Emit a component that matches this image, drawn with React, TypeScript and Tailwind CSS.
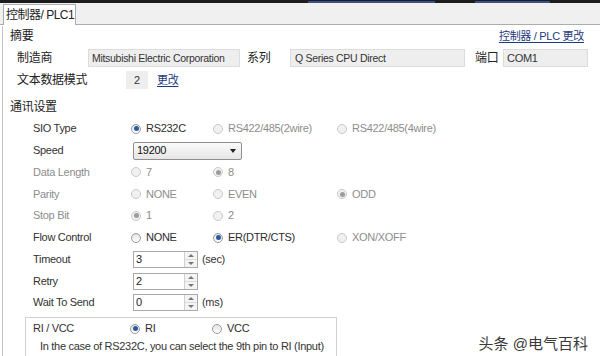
import React from "react";

const FONT = "font-['Liberation_Sans','Noto_Sans_CJK_SC',sans-serif]";

type RadioProps = { checked?: boolean; disabled?: boolean; label: string };

const Radio: React.FC<RadioProps> = ({ checked, disabled, label }) => (
  <div className="flex items-center">
    <span
      className={`w-[10px] h-[10px] rounded-full border flex items-center justify-center ${
        disabled
          ? "border-[#c9c9c9] bg-[#f1f1f1]"
          : "border-[#9a9a9a] bg-gradient-to-b from-[#e2e2e2] to-white"
      }`}
    >
      {checked && (
        <span
          className={`w-[5px] h-[5px] rounded-full ${
            disabled ? "bg-[#9c9c9c]" : "bg-[#2d5a9e]"
          }`}
        />
      )}
    </span>
    <span
      className={`ml-[5px] ${disabled ? "text-[#8d8d8d]" : "text-[#2e2e2e]"}`}
    >
      {label}
    </span>
  </div>
);

const Spin: React.FC<{ value: string; unit?: string }> = ({ value, unit }) => (
  <div className="flex items-center">
    <div className="w-[65px] h-[17px] border border-[#a9a9a9] bg-white flex items-center">
      <span className="flex-1 pl-[2px] text-[#222]">{value}</span>
      <div className="w-[13px] h-full border-l border-[#cfcfcf] flex flex-col">
        <div className="flex-1 flex items-center justify-center border-b border-[#dcdcdc] bg-[#f4f4f4]">
          <span className="w-0 h-0 border-l-[3px] border-r-[3px] border-b-[3px] border-l-transparent border-r-transparent border-b-[#777]" />
        </div>
        <div className="flex-1 flex items-center justify-center bg-[#f4f4f4]">
          <span className="w-0 h-0 border-l-[3px] border-r-[3px] border-t-[3px] border-l-transparent border-r-transparent border-t-[#777]" />
        </div>
      </div>
    </div>
    {unit && <span className="ml-[4px] text-[#333]">{unit}</span>}
  </div>
);

const Row: React.FC<{ label: string; disabled?: boolean; children: React.ReactNode }> = ({
  label,
  disabled,
  children,
}) => (
  <div className="h-[21.75px] flex items-center">
    <span className={`w-[98px] ${disabled ? "text-[#8d8d8d]" : "text-[#333]"}`}>{label}</span>
    {children}
  </div>
);

const Cols: React.FC<{ a: React.ReactNode; b?: React.ReactNode; c?: React.ReactNode }> = ({
  a,
  b,
  c,
}) => (
  <div className="flex items-center">
    <div className="w-[82px]">{a}</div>
    <div className="w-[124px]">{b}</div>
    <div>{c}</div>
  </div>
);

export default function App() {
  return (
    <div
      className={`${FONT} relative w-[600px] h-[356px] overflow-hidden bg-white text-[11px] tracking-[-0.3px] leading-none`}
    >
      {/* top edge, cut-off links */}
      <div className="h-[3px] bg-[#1c1c1c] flex">
        <div className="ml-[308px] mt-[1px] w-[127px] h-[2px] bg-[#3b4f8a]" />
        <div className="ml-[40px] mt-[1px] w-[75px] h-[2px] bg-[#3b4f8a]" />
      </div>

      {/* tab strip */}
      <div className="h-[22px] bg-[#f0f0f0] border-b border-[#acacac] flex items-end pl-[3px]">
        <div className="h-[21px] w-[73px] bg-white border border-b-0 border-[#acacac] flex items-center pl-[2px] text-[12px] tracking-[-0.5px] text-[#222] -mb-px">
          控制器/ PLC1
        </div>
      </div>

      {/* body */}
      <div className="h-[331px] ml-[2px] border-l border-[#c4c4c4] pl-[7px] pr-[11px]">
        <div className="h-[20px] mt-[1px] flex items-center justify-between">
          <span className="text-[12px] text-[#222]">摘要</span>
          <span className="mr-[5px] text-[#1d3a7e] underline underline-offset-2 text-[11px]">
            控制器 / PLC 更改
          </span>
        </div>

        <div className="h-[18px] mt-[3px] flex items-center pl-[7px] text-[12px]">
          <span className="w-[71px] text-[#222]">制造商</span>
          <div className="w-[152px] h-[18px] bg-[#eeeeee] border border-[#dcdcdc] flex items-center pl-[3px] text-[10.5px] text-[#333]">
            Mitsubishi Electric Corporation
          </div>
          <span className="ml-[7px] w-[43px] text-[#222]">系列</span>
          <div className="w-[175px] h-[18px] bg-[#eeeeee] border border-[#dcdcdc] flex items-center pl-[4px] text-[10.5px] text-[#333]">
            Q Series CPU Direct
          </div>
          <span className="ml-[10px] w-[28px] text-[#222]">端口</span>
          <div className="w-[85px] h-[18px] bg-[#eeeeee] border border-[#dcdcdc] flex items-center pl-[3px] text-[11px] text-[#333]">
            COM1
          </div>
        </div>

        <div className="h-[18px] mt-[4px] flex items-center pl-[7px] text-[12px]">
          <span className="w-[109px] text-[#222]">文本数据模式</span>
          <div className="w-[22px] h-[18px] bg-[#eeeeee] flex items-center justify-center text-[11px] text-[#333]">
            2
          </div>
          <span className="ml-[9px] text-[#1d3a7e] underline underline-offset-2 text-[11px]">
            更改
          </span>
        </div>

        <div className="h-[18px] mt-[9px] flex items-center text-[12px] text-[#222]">通讯设置</div>

        <div className="mt-[2px] pl-[23px]">
          <Row label="SIO Type">
            <Cols
              a={<Radio checked label="RS232C" />}
              b={<Radio disabled label="RS422/485(2wire)" />}
              c={<Radio disabled label="RS422/485(4wire)" />}
            />
          </Row>
          <Row label="Speed">
            <div className="ml-[2px] w-[109px] h-[18px] rounded-[2px] border border-[#8f8f8f] bg-gradient-to-b from-[#fbfbfb] to-[#e6e6e6] flex items-center justify-between pl-[3px] pr-[5px] text-[#111]">
              <span>19200</span>
              <span className="w-0 h-0 border-l-[3.5px] border-r-[3.5px] border-t-[4px] border-l-transparent border-r-transparent border-t-[#222]" />
            </div>
          </Row>
          <Row label="Data Length" disabled>
            <Cols a={<Radio disabled label="7" />} b={<Radio disabled checked label="8" />} />
          </Row>
          <Row label="Parity" disabled>
            <Cols
              a={<Radio disabled label="NONE" />}
              b={<Radio disabled label="EVEN" />}
              c={<Radio disabled checked label="ODD" />}
            />
          </Row>
          <Row label="Stop Bit" disabled>
            <Cols a={<Radio disabled checked label="1" />} b={<Radio disabled label="2" />} />
          </Row>
          <Row label="Flow Control">
            <Cols
              a={<Radio label="NONE" />}
              b={<Radio checked label="ER(DTR/CTS)" />}
              c={<Radio disabled label="XON/XOFF" />}
            />
          </Row>
          <Row label="Timeout">
            <div className="ml-[2px]">
              <Spin value="3" unit="(sec)" />
            </div>
          </Row>
          <Row label="Retry">
            <div className="ml-[2px]">
              <Spin value="2" />
            </div>
          </Row>
          <Row label="Wait To Send">
            <div className="ml-[2px]">
              <Spin value="0" unit="(ms)" />
            </div>
          </Row>
        </div>

        <div className="mt-[3px] ml-[15px] w-[312px] h-[60px] border border-[#d0d0d0] pl-[7px]">
          <div className="h-[20px] mt-[1px] flex items-center">
            <span className="w-[98px] text-[#333]">RI / VCC</span>
            <Cols a={<Radio checked label="RI" />} b={<Radio label="VCC" />} />
          </div>
          <div className="mt-[2px] pl-[7px] text-[#333] whitespace-nowrap">
            In the case of RS232C, you can select the 9th pin to RI (Input)
          </div>
        </div>
      </div>

      {/* watermark */}
      <div className="absolute right-[12px] bottom-[5px] text-[15px] tracking-normal text-[#3a3a3a] [text-shadow:0_0_2px_#fff]">
        头条 @电气百科
      </div>
    </div>
  );
}
